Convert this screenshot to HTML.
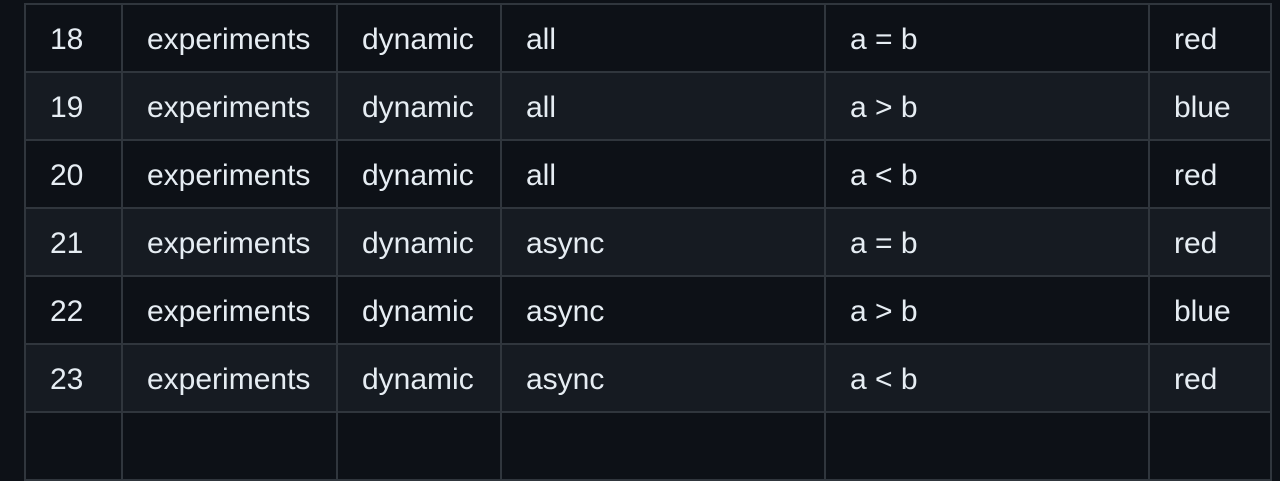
<!DOCTYPE html>
<html><head><style>
html,body{margin:0;padding:0;background:#0d1117;width:1280px;height:423px;overflow:hidden}
table{position:absolute;left:24px;top:3px;border-collapse:collapse;table-layout:fixed;font-family:"Liberation Sans",Arial,sans-serif;font-size:30px;color:#e6edf3}
td{border:2px solid #30363d;padding:4px 0 0 24px;white-space:nowrap;box-sizing:border-box;height:68px;line-height:30px}
tr:nth-child(odd){background:#0d1117}
tr:nth-child(even){background:#161b22}
</style></head><body>
<table>
<colgroup><col style="width:97px"><col style="width:215px"><col style="width:164px"><col style="width:324px"><col style="width:324px"><col style="width:122px"></colgroup>
<tr><td>18</td><td>experiments</td><td>dynamic</td><td>all</td><td>a = b</td><td>red</td></tr>
<tr><td>19</td><td>experiments</td><td>dynamic</td><td>all</td><td>a &gt; b</td><td>blue</td></tr>
<tr><td>20</td><td>experiments</td><td>dynamic</td><td>all</td><td>a &lt; b</td><td>red</td></tr>
<tr><td>21</td><td>experiments</td><td>dynamic</td><td>async</td><td>a = b</td><td>red</td></tr>
<tr><td>22</td><td>experiments</td><td>dynamic</td><td>async</td><td>a &gt; b</td><td>blue</td></tr>
<tr><td>23</td><td>experiments</td><td>dynamic</td><td>async</td><td>a &lt; b</td><td>red</td></tr>
<tr><td></td><td></td><td></td><td></td><td></td><td></td></tr>
</table>
</body></html>
